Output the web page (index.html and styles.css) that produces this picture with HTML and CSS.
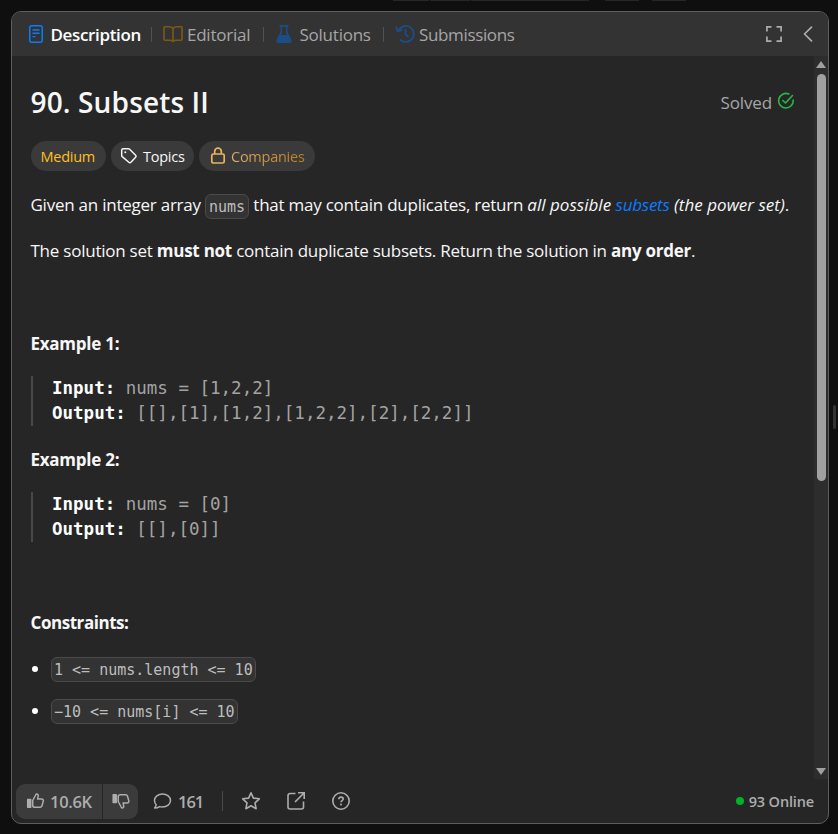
FILE: index.html
```
<!DOCTYPE html>
<html lang="en">
<head>
<meta charset="utf-8">
<title>90. Subsets II</title>
<link rel="stylesheet" href="styles.css">
</head>
<body>
<div class="remnants"><i></i><i></i><i></i><i></i><i></i></div>
<main class="panel">
  <header class="tabs">
    <div class="tab active">
      <svg class="i-desc" width="16" height="20" viewBox="0 0 16 20" fill="none" stroke="#0a7cff" stroke-width="1.5" stroke-linecap="round"><rect x="1.750" y="1.750" width="12.500" height="16.500" rx="2"/><path d="M5 6h6M5 9.200h6M5 12.600h2" stroke-width="1.400"/></svg>
      <span>Description</span>
    </div>
    <b class="sep"></b>
    <div class="tab t-edit">
      <svg width="20" height="18" viewBox="0 0 20 18" fill="none" stroke="#7c5a16" stroke-width="1.600" stroke-linejoin="round"><path d="M10 3.500C9 2.200 7.500 1.800 5.800 1.800H2a1 1 0 0 0-1 1v11.400a1 1 0 0 0 1 1h4.500c1.600 0 2.600.3 3.500 1.200.9-.9 1.900-1.200 3.500-1.200H18a1 1 0 0 0 1-1V2.800a1 1 0 0 0-1-1h-3.800C12.500 1.800 11 2.200 10 3.500zM10 3.500v12.500"/></svg>
      <span>Editorial</span>
    </div>
    <b class="sep"></b>
    <div class="tab t-sol">
      <svg width="16" height="18" viewBox="0 0 16 18" fill="#1b4e86"><path d="M3.500 0h9v1.700h-1V7l3.900 7.800c.8 1.600 0 3.200-1.800 3.200H2.400C.6 18-.2 16.400.6 14.800L4.500 7V1.700h-1zM6.100 1.700v5.700L4.800 10h6.400L9.900 7.400V1.700z" fill-rule="evenodd"/></svg>
      <span>Solutions</span>
    </div>
    <b class="sep"></b>
    <div class="tab t-sub">
      <svg width="20" height="20" viewBox="0 0 20 20" fill="none" stroke="#1b4e86" stroke-width="1.800" stroke-linecap="round" stroke-linejoin="round"><path d="M3.500 6.500a8 8 0 1 1 2 9.500"/><path d="M1.300 3.200l1.200 4.200 4.200-1.200M10.500 6v4.200l2.500 2.400"/></svg>
      <span>Submissions</span>
    </div>
    <div class="tools">
      <svg width="16" height="16" viewBox="0 0 16 16" fill="none" stroke="#adadad" stroke-width="1.700"><path d="M.9 5.500V.9h4.600M10.500.9h4.600v4.600M15.100 10.500v4.600h-4.600M5.500 15.100H.9v-4.600"/></svg>
      <svg width="10" height="16" viewBox="0 0 10 16" fill="none" stroke="#adadad" stroke-width="1.700" stroke-linecap="round" stroke-linejoin="round"><path d="M8.500 1.200L1.500 8l7 6.800"/></svg>
    </div>
  </header>
  <section class="body">
    <article class="content">
      <div class="title-row">
        <h1>90. Subsets II</h1>
        <div class="solved"><span>Solved</span>
          <svg width="18" height="18" viewBox="0 0 18 18" fill="none" stroke="#28b84a" stroke-width="1.600" stroke-linecap="round" stroke-linejoin="round"><path d="M11.800 2A7.300 7.300 0 1 0 16.200 8"/><path d="M5.800 8.500l2.700 2.500 7-7.500"/></svg>
        </div>
      </div>
      <div class="chips">
        <span class="chip medium">Medium</span>
        <span class="chip topics"><svg width="18" height="18" viewBox="0 0 18 18" fill="none" stroke="#f5f5f5" stroke-width="1.500" stroke-linejoin="round"><path d="M1.700 3.200c0-.9.600-1.500 1.500-1.500h5.200c.5 0 .9.200 1.200.5l6 6c.6.600.6 1.500 0 2.100l-4.700 5c-.6.600-1.500.6-2.100 0L2.200 9.600c-.3-.3-.5-.7-.5-1.200z"/><circle cx="5.300" cy="5.200" r="1" fill="#f5f5f5" stroke="none"/></svg><span>Topics</span></span>
        <span class="chip companies"><svg width="16" height="18" viewBox="0 0 16 18" fill="none" stroke="#e9b45c" stroke-width="1.700"><rect x="1.800" y="7" width="12.400" height="9" rx="1.600"/><path d="M4.700 7V4.500a3.300 3.300 0 0 1 6.600 0V7"/></svg><span>Companies</span></span>
      </div>
      <p class="p1"><span>Given an integer array</span> <code>nums</code> <span class="may">that may contain duplicates, return</span> <em>all possible <a>subsets</a> (the power set)</em>.</p>
      <p class="p2">The solution set <strong>must not</strong> contain duplicate subsets. Return the solution in <strong>any order</strong>.</p>
      <p class="ex1"><strong>Example 1:</strong></p>
      <pre><b>Input:</b> nums = [1,2,2]
<b>Output:</b> [[],[1],[1,2],[1,2,2],[2],[2,2]]</pre>
      <p class="ex2"><strong>Example 2:</strong></p>
      <pre><b>Input:</b> nums = [0]
<b>Output:</b> [[],[0]]</pre>
      <p class="con"><strong>Constraints:</strong></p>
      <ul>
        <li><code>1 &lt;= nums.length &lt;= 10</code></li>
        <li><code>&minus;10 &lt;= nums[i] &lt;= 10</code></li>
      </ul>
    </article>
    <div class="scroll">
      <i class="up"></i><i class="thumb"></i><i class="down"></i>
    </div>
  </section>
  <footer>
    <div class="votes">
      <span class="vote up-vote"><svg width="19" height="18" viewBox="0 0 19 18" fill="none" stroke="#adadad" stroke-width="1.500" stroke-linejoin="round"><path d="M1.700 7.500h3V15.200h-3z" fill="#adadad"/><path d="M6.700 8.500L10.200 2c1.500-.2 2.300.8 2 2.200l-.6 2.900h4.200c1.100 0 1.800.9 1.500 2l-1.300 4.700c-.3 1-1 1.500-2 1.500H9c-1.500 0-2.300-.8-2.300-2.100z"/></svg><span>10.6K</span></span>
      <span class="vote down-vote"><svg width="19" height="18" viewBox="0 0 19 18" fill="none" stroke="#adadad" stroke-width="1.500" stroke-linejoin="round"><path d="M1.200 2.800h3v7.700h-3z" fill="#adadad"/><path d="M6.200 9.500l3.500 6.500c1.500.2 2.300-.8 2-2.200l-.6-2.900h4.200c1.100 0 1.800-.9 1.500-2l-1.300-4.700c-.3-1-1-1.500-2-1.500h-5c-1.500 0-2.300.8-2.300 2.100z"/></svg></span>
    </div>
    <div class="comments"><svg width="19" height="18" viewBox="0 0 19 18" fill="none" stroke="#adadad" stroke-width="1.500" stroke-linejoin="round"><path d="M9.500 2c4.500 0 8 2.900 8 6.500S14 15 9.500 15c-1 0-2-.1-2.900-.4-1.300.9-3 1.500-5 1.400.9-1 1.500-2 1.600-3.200C2.100 11.600 1.500 10.100 1.500 8.500 1.500 4.900 5 2 9.500 2z"/></svg><span>161</span></div>
    <b class="fsep"></b>
    <svg class="star" width="20" height="20" viewBox="0 0 20 20" fill="none" stroke="#adadad" stroke-width="1.600" stroke-linejoin="round"><path d="M10 1.800l2.400 5.300 5.900.7-4.300 4 1.100 5.900-5.100-2.900-5.100 2.900L6 11.800l-4.300-4 5.900-.7z"/></svg>
    <svg class="share" width="20" height="20" viewBox="0 0 20 20" fill="none" stroke="#adadad" stroke-width="1.600"><path d="M9.500 2.500H4a2 2 0 0 0-2 2V16a2 2 0 0 0 2 2h11.500a2 2 0 0 0 2-2v-5.500M12 1.800h6.200V8M18 2L9 11"/></svg>
    <svg class="help" width="20" height="20" viewBox="0 0 20 20" fill="none" stroke="#adadad" stroke-width="1.600"><circle cx="10" cy="10" r="8.200"/><path d="M7.800 8.200c0-1.300 1-2.100 2.200-2.100s2.200.8 2.200 1.900c0 1.500-2.200 1.600-2.200 3.200"/><circle cx="10" cy="13.500" r="1" fill="#adadad" stroke="none"/></svg>
    <div class="online"><i></i><span>93 Online</span></div>
  </footer>
</main>
<i class="grip"></i>
</body>
</html>
```

FILE: styles.css
```
* { box-sizing: border-box; margin: 0; padding: 0; }
body {
  width: 838px; height: 834px; overflow: hidden; background: #0f0f0f;
  font-family: "Open Sans", "Noto Sans", sans-serif; font-size: 17px;
  letter-spacing: -0.24px; color: #f7f7f7; position: relative;
}
svg { display: block; flex: none; }
.remnants { display: flex; height: 11px; padding-left: 393px; gap: 1px; }
.remnants i { height: 1px; width: 36px; background: #262626; }
.remnants i:nth-child(2) { width: 40px; }
.remnants i:nth-child(3) { width: 118px; }
.remnants i:nth-child(4) { width: 34px; margin-left: 15px; }
.remnants i:nth-child(5) { width: 34px; margin-left: 12px; }
.panel {
  margin-left: 11px; width: 818px; height: 813px; display: flex; flex-direction: column;
  border: 1px solid #5e5e5e; border-radius: 10px; overflow: hidden; background: #262626;
}
.tabs { height: 44px; flex: none; background: #333; display: flex; align-items: center; padding: 0 15px 0 16px; color: #a6a6a6; }
.tab { display: flex; align-items: center; }
.tab span { line-height: 24px; padding-top: 1px; }
.active { font-weight: 600; color: #fff; width: 123px; letter-spacing: -0.35px; }
.active span { margin-left: 6.5px; }
.t-edit { width: 100px; margin-left: 11px; }
.t-edit span { margin-left: 4px; }
.t-sol { width: 107px; margin-left: 12px; }
.t-sol span { margin-left: 7.5px; }
.t-sub { margin-left: 11px; letter-spacing: -0.35px; }
.t-sub span { margin-left: 4px; }
.sep { width: 1px; height: 15px; background: #525252; }
.tools { margin-left: auto; display: flex; align-items: center; gap: 21px; }
.body { flex: 1; display: flex; min-height: 0; }
.content { flex: 1; padding: 26px 19px 0 18.5px; white-space: nowrap; }
.title-row { display: flex; justify-content: space-between; height: 40px; align-items: center; }
h1 { font-size: 28px; font-weight: 600; line-height: 40px; letter-spacing: 0.15px; }
.solved { display: flex; align-items: center; gap: 5px; color: #a6a6a6; line-height: 40px; letter-spacing: -0.15px; }
.solved span { padding-top: 1px; }
.solved svg { margin-top: -3px; }
.chips { display: flex; gap: 5px; margin: 19px 0 0 .5px; font-size: 14.5px; letter-spacing: -0.25px; }
.chip { height: 30px; border-radius: 15px; background: #3a3a3a; display: flex; align-items: center; line-height: 30px; }
.medium { width: 75px; padding: 1px 0 0 9.5px; color: #ffc01e; }
.topics { width: 83px; padding-left: 9px; gap: 5px; }
.companies { width: 116px; padding-left: 11px; gap: 5px; }
.chip > span { padding-top: 1px; }
.companies span { color: transparent; background: linear-gradient(90deg, #dfae67, #bd7d20); -webkit-background-clip: text; background-clip: text; }
p { line-height: 26px; height: 26px; }
strong { font-weight: 700; letter-spacing: -0.25px; }
em { letter-spacing: 0.02px; }
a { color: #0a7cff; letter-spacing: -0.24px; }
code {
  font: 15px/23px "DejaVu Sans Mono", monospace; letter-spacing: 0; color: #bdbdbd;
  display: inline-block; height: 25px; padding: 1px 3px 0; background: #333;
  border: 1px solid #4b4b4b; border-radius: 6px; vertical-align: middle;
}
li code { padding: 1px 2px 0; }
.p1 { margin-top: 21px; }
.p2 { margin-top: 20px; }
.ex1 { margin-top: 67px; }
.ex2 { margin-top: 21px; }
.con { margin-top: 68px; }
.con strong { letter-spacing: -0.45px; }
pre {
  margin: 19px 0 0 .5px; height: 50px; border-left: 2px solid #484848; padding-left: 19px;
  font: 17.5px/25px "DejaVu Sans Mono", monospace; letter-spacing: 0; color: #a3a3a3;
}
pre b { color: #fff; }
ul { list-style: none; margin-top: 21px; }
li { display: flex; align-items: center; height: 25px; margin-bottom: 17px; }
li::before { content: ""; width: 6px; height: 6px; border-radius: 50%; background: #fff; margin: -1px 13px 0 1.5px; }
.scroll { width: 14px; background: #2d2d2d; height: 723px; display: flex; flex-direction: column; align-items: center; padding-top: 5px; }
.up { border: 5px solid transparent; border-top: 0; border-bottom: 7px solid #a0a0a0; }
.thumb { width: 9px; height: 407px; border-radius: 5px; background: #a0a0a0; margin-top: 6px; }
.down { border: 5px solid transparent; border-bottom: 0; border-top: 7px solid #a0a0a0; margin-top: 287px; }
footer { height: 44px; flex: none; padding: 4px 14px 5px 4px; display: flex; align-items: center; color: #adadad; font-weight: 600; }
.comments span, .online span { padding-top: 2px; }
.votes { display: flex; gap: 1px; padding-top: 1px; }
.vote { height: 35px; background: #3b3b3b; display: flex; align-items: center; }
.up-vote { width: 86px; border-radius: 9px 0 0 9px; padding-left: 10px; gap: 5px; font-size: 16.5px; letter-spacing: -0.3px; }
.down-vote { width: 35px; border-radius: 0 9px 9px 0; padding-left: 9px; }
.comments { display: flex; align-items: center; gap: 6px; margin-left: 15px; width: 69px; font-size: 16.5px; letter-spacing: -1px; }
.fsep { width: 1px; height: 20px; background: #484848; }
.star { margin-left: 18px; }
.share { margin-left: 25px; }
.help { margin-left: 25px; }
.online { margin-left: auto; display: flex; align-items: center; gap: 5px; font-size: 14.5px; letter-spacing: -0.15px; }
.online i { width: 8px; height: 8px; border-radius: 50%; background: #02b128; }
.grip { position: absolute; left: 833px; top: 405px; width: 3px; height: 24px; border-radius: 2px; background: #333; }
```
